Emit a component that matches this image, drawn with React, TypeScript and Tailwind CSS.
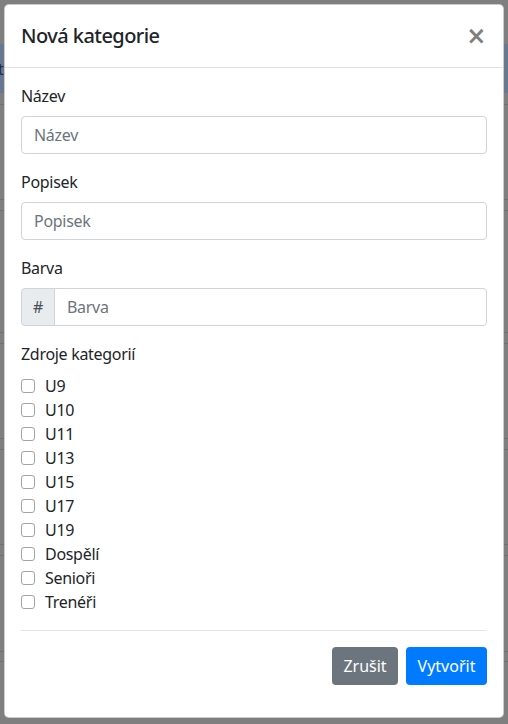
const sources = ['U9', 'U10', 'U11', 'U13', 'U15', 'U17', 'U19', 'Dospělí', 'Senioři', 'Trenéři'];

const Line = () => <div className="h-px bg-[#707070]" />;

const PageBehind = () => (
  <div className="w-full h-full bg-[#7f7f7f]">
    <div className="h-[44px]" />
    <div className="h-[49px] bg-[#687890] flex items-center">
      <span className="text-[#1f2d40] text-base leading-6 -ml-[2px]">t</span>
    </div>
    <div className="h-[11px]" />
    <Line />
    <div className="h-[94px]" />
    <Line />
    <div className="h-[10px]" />
    <Line />
    <div className="h-[121px]" />
    <Line />
    <div className="h-[10px]" />
    <Line />
    <div className="h-[94px]" />
    <Line />
    <div className="h-[10px]" />
    <Line />
    <div className="h-[94px]" />
    <Line />
    <div className="h-[10px]" />
    <Line />
    <div className="h-[95px]" />
    <Line />
    <div className="h-[9px]" />
    <Line />
  </div>
);

const Field = ({ label }: { label: string }) => (
  <div className="mb-4">
    <label className="block mb-2 leading-6">{label}</label>
    <input
      placeholder={label}
      className="block w-full h-[38px] px-3 border border-[#ced4da] rounded-[4px] text-[#495057] placeholder:text-[#6c757d] outline-none"
    />
  </div>
);

export default function App() {
  return (
    <div className="relative w-[508px] h-[724px] overflow-hidden font-['Noto_Sans',sans-serif] text-base tracking-[-0.3px] text-[#212529]">
      <PageBehind />

      <div className="absolute left-[4px] top-[4px] w-[500px] bg-white border border-black/20 rounded-[5px]">
        <div className="flex items-start justify-between p-4 border-b border-[#dee2e6]">
          <h5 className="text-[20px] font-medium leading-[30px] tracking-[-0.55px]">Nová kategorie</h5>
          <button className="font-['DejaVu_Sans',sans-serif] text-[24px] font-bold leading-[30px] text-black opacity-50 mr-[1px]">
            ×
          </button>
        </div>

        <div className="p-4">
          <Field label="Název" />
          <Field label="Popisek" />

          <div className="mb-4">
            <label className="block mb-2 leading-6">Barva</label>
            <div className="flex h-[38px]">
              <span className="w-[34px] flex items-center justify-center bg-[#e9ecef] border border-[#ced4da] rounded-l-[4px] text-[#495057]">
                #
              </span>
              <input
                placeholder="Barva"
                className="flex-1 min-w-0 px-3 -ml-px border border-[#ced4da] rounded-r-[4px] text-[#495057] placeholder:text-[#6c757d] outline-none"
              />
            </div>
          </div>

          <div className="mb-4">
            <label className="block mb-2 leading-6">Zdroje kategorií</label>
            {sources.map((s) => (
              <label key={s} className="flex items-center h-6">
                <span className="w-[14px] h-[14px] border border-[#a3a3a3] rounded-[3px] bg-white" />
                <span className="ml-[10px] leading-6">{s}</span>
              </label>
            ))}
          </div>

          <hr className="my-4 border-t border-black/10" />

          <div className="flex justify-end gap-2 mb-4">
            <button className="w-[66px] h-[38px] rounded-[4px] bg-[#6c757d] text-white tracking-normal">Zrušit</button>
            <button className="w-[81px] h-[38px] rounded-[4px] bg-[#007bff] text-white tracking-normal">Vytvořit</button>
          </div>
        </div>
      </div>
    </div>
  );
}
